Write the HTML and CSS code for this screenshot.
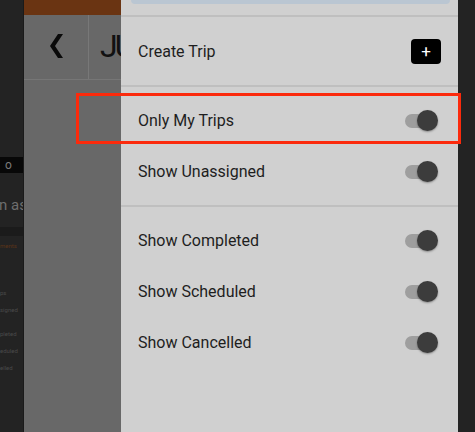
FILE: index.html
```html
<!DOCTYPE html>
<html lang="en">
<head>
<meta charset="utf-8">
<title>Trips filter menu</title>
<link rel="stylesheet" href="styles.css">
</head>
<body>
<div class="screen">
  <aside class="left-strip">
    <div class="strip-bar"><span>o</span></div>
    <div class="strip-title">n as</div>
    <div class="strip-band"></div>
    <div class="strip-link">ments</div>
    <div class="strip-list">
      <span class="strip-item first">ps</span>
      <span class="strip-item">signed</span>
      <span class="strip-item gap">pleted</span>
      <span class="strip-item">eduled</span>
      <span class="strip-item">elled</span>
    </div>
  </aside>

  <section class="dim-page">
    <div class="dim-top"></div>
    <div class="dim-header">
      <div class="back-cell">
        <svg class="back-icon" width="14" height="26" viewBox="0 0 14 26"><polygon points="8,0 13,0 5,12 13,24 8,24 0,12" fill="#0a0a0a"/></svg>
      </div>
      <div class="title-cell">JU</div>
    </div>
  </section>

  <nav class="panel">
    <div class="panel-top"><div class="search-strip"></div></div>
    <div class="create-row">
      <span class="label">Create Trip</span>
      <button class="plus-btn" type="button">+</button>
    </div>
    <div class="section">
      <div class="row"><span class="label">Only My Trips</span><span class="toggle"></span></div>
      <div class="row"><span class="label">Show Unassigned</span><span class="toggle"></span></div>
    </div>
    <div class="section last">
      <div class="row"><span class="label">Show Completed</span><span class="toggle"></span></div>
      <div class="row"><span class="label">Show Scheduled</span><span class="toggle"></span></div>
      <div class="row"><span class="label">Show Cancelled</span><span class="toggle"></span></div>
    </div>
  </nav>

  <aside class="right-strip"></aside>

  <div class="highlight"></div>
</div>
</body>
</html>
```

FILE: styles.css
```css
* { box-sizing: border-box; }

html, body {
  margin: 0;
  padding: 0;
  background: #232323;
}

body {
  font-family: Roboto, "Liberation Sans", sans-serif;
}

.screen {
  position: relative;
  display: flex;
  width: 475px;
  height: 432px;
  overflow: hidden;
}

/* left dark strip (underlying page, heavily dimmed) */
.left-strip {
  width: 24px;
  flex: none;
  background: #232323;
  border-right: 1px solid #1a1a1a;
  overflow: hidden;
  white-space: nowrap;
  padding-top: 157px;
}

.strip-bar {
  height: 16px;
  background: #080808;
  color: #7a7a7a;
  font-size: 12px;
  line-height: 16px;
  padding-left: 5px;
}

.strip-title {
  margin-top: 23px;
  color: #6e6e6e;
  font-size: 15px;
  line-height: 18px;
  margin-left: -1px;
}

.strip-band {
  margin-top: 13px;
  height: 9px;
  background: #1b1b1b;
}

.strip-link {
  margin-top: 6px;
  font-size: 6px;
  line-height: 8px;
  color: #5b3418;
}

.strip-list {
  display: flex;
  flex-direction: column;
  font-size: 6px;
  line-height: 8px;
  color: #4a4a4a;
}

.strip-item { margin-top: 9px; }
.strip-item.first { margin-top: 39px; }
.strip-item.gap { margin-top: 16px; }

/* dimmed page region */
.dim-page {
  width: 97px;
  flex: none;
  background: #686868;
}

.dim-top {
  height: 15px;
  background: #6a3412;
}

.dim-header {
  display: flex;
  height: 65px;
  border-bottom: 1px solid #767676;
}

.back-cell {
  width: 65px;
  flex: none;
  display: flex;
  align-items: center;
  justify-content: center;
  border-right: 1px solid #787878;
  padding-left: 2px;
}

.back-icon { display: block; }

.title-cell {
  flex: 1;
  overflow: hidden;
  white-space: nowrap;
  color: #111;
  font-size: 32px;
  font-weight: 400;
  letter-spacing: -3px;
  line-height: 62px;
  padding-left: 11px;
}

/* drawer panel */
.panel {
  width: 337px;
  flex: none;
  background: #d0d0d0;
}

.panel-top {
  height: 17px;
  padding: 0 8px 0 10px;
  border-bottom: 2px solid #bfbfbf;
}

.search-strip {
  height: 4px;
  background: #bac6d2;
  border-radius: 0 0 5px 5px;
}

.label {
  color: #1e1e1e;
  font-size: 16px;
}

.create-row {
  display: flex;
  align-items: center;
  justify-content: space-between;
  height: 70px;
  padding: 0 17px;
  border-bottom: 2px solid #bfbfbf;
}

.plus-btn {
  width: 30px;
  height: 25px;
  border: none;
  border-radius: 4px;
  background: #000;
  color: #ffffff;
  font-family: Roboto, "Liberation Sans", sans-serif;
  font-size: 17px;
  font-weight: 400;
  line-height: 25px;
  padding: 0;
  margin-top: 1px;
}

.section {
  padding: 8px 0;
  border-bottom: 2px solid #bfbfbf;
}

.section.last { border-bottom: none; }

.row {
  display: flex;
  align-items: center;
  justify-content: space-between;
  height: 51px;
  padding: 0 20px 0 17px;
}

.toggle {
  position: relative;
  width: 33px;
  height: 21px;
}

.toggle::before {
  content: "";
  position: absolute;
  left: 0;
  top: 4px;
  width: 30px;
  height: 14px;
  border-radius: 7px;
  background: #9e9e9e;
}

.toggle::after {
  content: "";
  position: absolute;
  right: 0;
  top: 0;
  width: 21px;
  height: 21px;
  border-radius: 50%;
  background: #3c3c3c;
  box-shadow: 0 1px 2px rgba(0, 0, 0, 0.35);
}

.right-strip {
  flex: 1;
  background: #232323;
}

/* annotation box */
.highlight {
  position: absolute;
  left: 76px;
  top: 93px;
  width: 385px;
  height: 51px;
  border: 3px solid #fb2a0c;
  pointer-events: none;
}
```
